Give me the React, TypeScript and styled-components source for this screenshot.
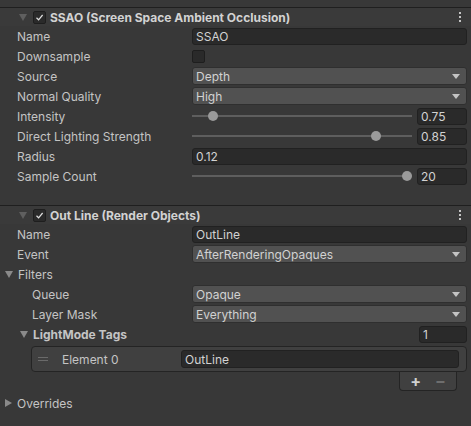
import React from "react";
import styled, { createGlobalStyle } from "styled-components";

const GlobalStyle = createGlobalStyle`
  html, body {
    margin: 0;
    padding: 0;
    background: #383838;
  }
  body {
    font-family: Inter, "Noto Sans", "Liberation Sans", sans-serif;
    font-size: 12px;
    color: #c4c4c4;
  }
`;

const Panel = styled.div`
  width: 471px;
  height: 426px;
  background: #383838;
  padding-top: 7px;
  box-sizing: border-box;
  overflow: hidden;
`;

const Component = styled.section<{ $gap: number }>`
  padding-bottom: ${(p) => p.$gap}px;
`;

const Header = styled.div`
  height: 18px;
  border-top: 1px solid #1f1f1f;
  background: #3a3a3a;
  display: flex;
  align-items: center;
  padding-left: 19px;
  padding-right: 10px;
`;

const HeaderTitle = styled.span`
  flex: 1;
  font-weight: 700;
  color: #d2d2d2;
  margin-left: 4px;
  white-space: nowrap;
`;

const Arrow = styled.span<{ $open: boolean; $dim?: boolean }>`
  width: 0;
  height: 0;
  flex: none;
  ${(p) =>
    p.$open
      ? `border-left: 4px solid transparent;
         border-right: 4px solid transparent;
         border-top: 7px solid ${p.$dim ? "#5f5f5f" : "#8a8a8a"};`
      : `border-top: 4px solid transparent;
         border-bottom: 4px solid transparent;
         border-left: 7px solid #8a8a8a;`}
`;

const TitleCheck = styled.span`
  width: 11px;
  height: 11px;
  margin-left: 6px;
  background: #2a2a2a;
  border: 1px solid #1e1e1e;
  border-radius: 2px;
  display: flex;
  align-items: center;
  justify-content: center;
`;

const Kebab = styled.span`
  display: flex;
  flex-direction: column;
  gap: 2px;
  span {
    width: 2px;
    height: 2px;
    background: #c4c4c4;
  }
`;

const Row = styled.div<{ $indent?: number }>`
  height: 20px;
  display: grid;
  grid-template-columns: 192px 1fr;
  align-items: center;
  padding-right: 4px;
  > :first-child {
    padding-left: ${(p) => 17 + (p.$indent || 0)}px;
  }
`;

const Label = styled.span`
  white-space: nowrap;
`;

const TextField = styled.div`
  height: 17px;
  box-sizing: border-box;
  background: #2a2a2a;
  border: 1px solid #212121;
  border-radius: 3px;
  color: #d2d2d2;
  font-weight: 400;
  padding-left: 3px;
  display: flex;
  align-items: center;
  white-space: nowrap;
  overflow: hidden;
`;

const Dropdown = styled.div`
  height: 18px;
  box-sizing: border-box;
  background: #515151;
  border: 1px solid #2f2f2f;
  border-radius: 3px;
  color: #d2d2d2;
  padding: 0 6px 0 3px;
  display: flex;
  align-items: center;
  justify-content: space-between;
`;

const DropArrow = styled.span`
  width: 0;
  height: 0;
  border-left: 4px solid transparent;
  border-right: 4px solid transparent;
  border-top: 5px solid #c4c4c4;
`;

const Checkbox = styled.span`
  width: 13px;
  height: 13px;
  box-sizing: border-box;
  background: #2a2a2a;
  border: 1px solid #1e1e1e;
  border-radius: 2px;
`;

const SliderWrap = styled.div`
  display: flex;
  align-items: center;
  gap: 5px;
`;

const Track = styled.div`
  flex: 1;
  height: 2px;
  background: #5e5e5e;
  position: relative;
`;

const Thumb = styled.span`
  position: absolute;
  top: -4px;
  width: 10px;
  height: 10px;
  margin-left: -5px;
  border-radius: 50%;
  background: #9a9a9a;
`;

const NumberField = styled(TextField)`
  width: 50px;
  flex: none;
`;

const Foldout = styled.div<{ $indent?: number; $bold?: boolean }>`
  height: 20px;
  display: flex;
  align-items: center;
  gap: 5px;
  padding-left: ${(p) => 5 + (p.$indent || 0)}px;
  padding-right: 4px;
  font-weight: ${(p) => (p.$bold ? 700 : 400)};
  white-space: nowrap;
`;

const Spacer = styled.span`
  flex: 1;
`;

const CountField = styled(TextField)`
  width: 48px;
`;

const ListBox = styled.div`
  margin: 2px 4px 0 31px;
  height: 26px;
  box-sizing: border-box;
  background: #404040;
  border: 1px solid #242424;
  border-radius: 4px;
  display: flex;
  align-items: center;
  padding: 0 7px 0 6px;
`;

const Handle = styled.span`
  width: 10px;
  display: flex;
  flex-direction: column;
  gap: 2px;
  span {
    height: 1px;
    background: #6a6a6a;
  }
`;

const ElementLabel = styled.span`
  margin-left: 14px;
  width: 119px;
`;

const ElementField = styled(TextField)`
  flex: 1;
  height: 18px;
`;

const ListFooter = styled.div`
  display: flex;
  justify-content: flex-end;
  padding-right: 14px;
`;

const FooterBox = styled.div`
  width: 58px;
  height: 19px;
  box-sizing: border-box;
  background: #404040;
  border: 1px solid #242424;
  border-top: none;
  border-radius: 0 0 4px 4px;
  display: flex;
  align-items: center;
  justify-content: center;
  gap: 14px;
`;

const FooterBtn = styled.span<{ $dim?: boolean }>`
  color: ${(p) => (p.$dim ? "#6e6e6e" : "#d0d0d0")};
  font-size: 16px;
  font-weight: 700;
  line-height: 1;
  margin-top: -1px;
`;

const OverridesRow = styled(Foldout)`
  margin-top: 2px;
`;

const Check = () => (
  <svg width="9" height="9" viewBox="0 0 9 9">
    <path d="M1.5 4.8 L3.6 6.8 L7.6 2" stroke="#e0e0e0" strokeWidth="1.2" fill="none" />
  </svg>
);

const ComponentHeader: React.FC<{ title: string }> = ({ title }) => (
  <Header>
    <Arrow $open $dim />
    <TitleCheck>
      <Check />
    </TitleCheck>
    <HeaderTitle>{title}</HeaderTitle>
    <Kebab>
      <span />
      <span />
      <span />
    </Kebab>
  </Header>
);

const Slider: React.FC<{ value: number; max: number; text: string }> = ({ value, max, text }) => (
  <SliderWrap>
    <Track>
      <Thumb style={{ left: `calc(5px + (100% - 10px) * ${value / max})` }} />
    </Track>
    <NumberField>{text}</NumberField>
  </SliderWrap>
);

const Field: React.FC<{ label: string; indent?: number; children: React.ReactNode }> = ({
  label,
  indent,
  children,
}) => (
  <Row $indent={indent}>
    <Label>{label}</Label>
    {children}
  </Row>
);

const Select: React.FC<{ value: string }> = ({ value }) => (
  <Dropdown>
    <span>{value}</span>
    <DropArrow />
  </Dropdown>
);

export default function App() {
  return (
    <>
      <GlobalStyle />
      <Panel>
        <Component $gap={19}>
          <ComponentHeader title="SSAO (Screen Space Ambient Occlusion)" />
          <Field label="Name">
            <TextField>SSAO</TextField>
          </Field>
          <Field label="Downsample">
            <Checkbox />
          </Field>
          <Field label="Source">
            <Select value="Depth" />
          </Field>
          <Field label="Normal Quality">
            <Select value="High" />
          </Field>
          <Field label="Intensity">
            <Slider value={0.75} max={10} text="0.75" />
          </Field>
          <Field label="Direct Lighting Strength">
            <Slider value={0.85} max={1} text="0.85" />
          </Field>
          <Field label="Radius">
            <TextField>0.12</TextField>
          </Field>
          <Field label="Sample Count">
            <Slider value={20} max={20} text="20" />
          </Field>
        </Component>

        <Component $gap={0}>
          <ComponentHeader title="Out Line (Render Objects)" />
          <Field label="Name">
            <TextField>OutLine</TextField>
          </Field>
          <Field label="Event">
            <Select value="AfterRenderingOpaques" />
          </Field>
          <Foldout>
            <Arrow $open />
            <span>Filters</span>
          </Foldout>
          <Field label="Queue" indent={15}>
            <Select value="Opaque" />
          </Field>
          <Field label="Layer Mask" indent={15}>
            <Select value="Everything" />
          </Field>
          <Foldout $indent={15} $bold>
            <Arrow $open />
            <span>LightMode Tags</span>
            <Spacer />
            <CountField>1</CountField>
          </Foldout>
          <ListBox>
            <Handle>
              <span />
              <span />
            </Handle>
            <ElementLabel>Element 0</ElementLabel>
            <ElementField>OutLine</ElementField>
          </ListBox>
          <ListFooter>
            <FooterBox>
              <FooterBtn>+</FooterBtn>
              <FooterBtn $dim>−</FooterBtn>
            </FooterBox>
          </ListFooter>
          <OverridesRow>
            <Arrow $open={false} />
            <span>Overrides</span>
          </OverridesRow>
        </Component>
      </Panel>
    </>
  );
}
